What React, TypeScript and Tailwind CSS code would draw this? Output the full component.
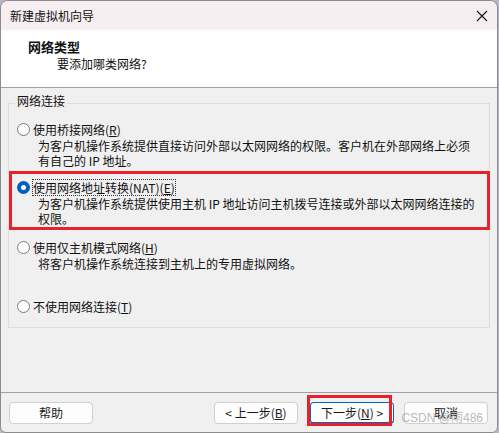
import React from "react";

const font = { fontFamily: '"Noto Sans CJK SC", "Noto Sans", sans-serif' };

function Radio({ checked }: { checked?: boolean }) {
  if (checked)
    return (
      <span className="flex h-[13px] w-[13px] shrink-0 items-center justify-center rounded-full bg-[#005fb8]">
        <span className="h-[5px] w-[5px] rounded-full bg-white" />
      </span>
    );
  return <span className="h-[13px] w-[13px] shrink-0 rounded-full border border-[#7a7a7a] bg-white" />;
}

function Option({ label, keyChar, suffix, desc, checked, focus }: { label: string; keyChar: string; suffix?: string; desc?: string[]; checked?: boolean; focus?: boolean }) {
  return (
    <div>
      <div className="flex h-[15px] items-center gap-[3px]">
        <Radio checked={checked} />
        <span className={focus ? "outline outline-1 outline-dotted outline-[#333] leading-[15px]" : "leading-[15px]"}>
          {label}
          {suffix}(<span className="underline">{keyChar}</span>)
        </span>
      </div>
      {desc && (
        <div className="mt-[1px] pl-[21px] leading-[15px]">
          {desc.map((d) => (
            <div key={d}>{d}</div>
          ))}
        </div>
      )}
    </div>
  );
}

function Btn({ children, primary }: { children: React.ReactNode; primary?: boolean }) {
  return (
    <div
      className={
        "flex h-[22px] w-[84px] items-center justify-center rounded-[4px] border bg-[#fdfdfd] text-[12px] text-[#1a1a1a] " +
        (primary ? "border-[#0067c0] border-b-2" : "border-[#d0d0d0]")
      }
    >
      {children}
    </div>
  );
}

export default function App() {
  return (
    <div className="h-[433px] w-[499px] bg-[#b8b4c8]" style={font}>
      <div className="flex h-[433px] w-[498px] flex-col overflow-hidden rounded-t-[8px] rounded-b-[6px] border border-[#8c8c8c] bg-[#f0f0f0] text-[12px] text-[#111]">
        <div className="flex h-[29px] shrink-0 items-center justify-between bg-[#f6eef0] pl-[9px] pr-[8px]">
          <span>新建虚拟机向导</span>
          <svg width="12" height="12" viewBox="0 0 12 12" className="mr-[1px]">
            <path d="M1 1L11 11M11 1L1 11" stroke="#111" strokeWidth="1.1" />
          </svg>
        </div>
        <div className="h-[58px] shrink-0 border-b border-[#a0a0a0] bg-white pl-[27px] pt-[8px]">
          <div className="text-[13px] font-bold leading-[17px]">网络类型</div>
          <div className="pl-[29px] leading-[17px]">要添加哪类网络?</div>
        </div>
        <div className="flex-1">
          <div className="relative ml-[7px] mt-[15px] h-[225px] w-[482px] border border-[#dcdcdc]">
            <span className="absolute left-[6px] top-[-11px] bg-[#f0f0f0] px-[2px] leading-[15px]">网络连接</span>
            <div className="pl-[8px] pt-[18px]">
              <Option label="使用桥接网络" keyChar="R" desc={["为客户机操作系统提供直接访问外部以太网网络的权限。客户机在外部网络上必须", "有自己的 IP 地址。"]} />
            </div>
            <div className="mt-[3px] w-[481px] border-[3px] border-[#e8212b] pb-[1px] pl-[5px] pt-[6px]">
              <Option checked focus label="使用网络地址转换" suffix="(NAT)" keyChar="E" desc={["为客户机操作系统提供使用主机 IP 地址访问主机拨号连接或外部以太网网络连接的", "权限。"]} />
            </div>
            <div className="mt-[10px] pl-[8px]">
              <Option label="使用仅主机模式网络" keyChar="H" desc={["将客户机操作系统连接到主机上的专用虚拟网络。"]} />
            </div>
            <div className="mt-[28px] pl-[8px]">
              <Option label="不使用网络连接" keyChar="T" />
            </div>
          </div>
        </div>
        <div className="relative flex h-[40px] shrink-0 items-start border-t border-[#a0a0a0] pt-[9px]">
          <div className="ml-[8px]">
            <Btn>帮助</Btn>
          </div>
          <div className="ml-[121px]">
            <Btn>
              &lt; 上一步(<span className="underline">B</span>)
            </Btn>
          </div>
          <div className="relative ml-[12px]">
            <Btn primary>
              下一步(<span className="underline">N</span>) &gt;
            </Btn>
            <div className="absolute left-[-3px] top-[-7px] h-[31px] w-[85px] border-[3px] border-[#e8212b]" />
          </div>
          <div className="ml-[10px]">
            <Btn>取消</Btn>
          </div>
          <span className="absolute right-[14px] top-[18px] text-[12px] leading-[15px] text-[#a8a8a8]/80" style={{ fontFamily: '"Liberation Sans", "Noto Sans CJK SC", sans-serif' }}>
            CSDN @雨486
          </span>
        </div>
      </div>
    </div>
  );
}
